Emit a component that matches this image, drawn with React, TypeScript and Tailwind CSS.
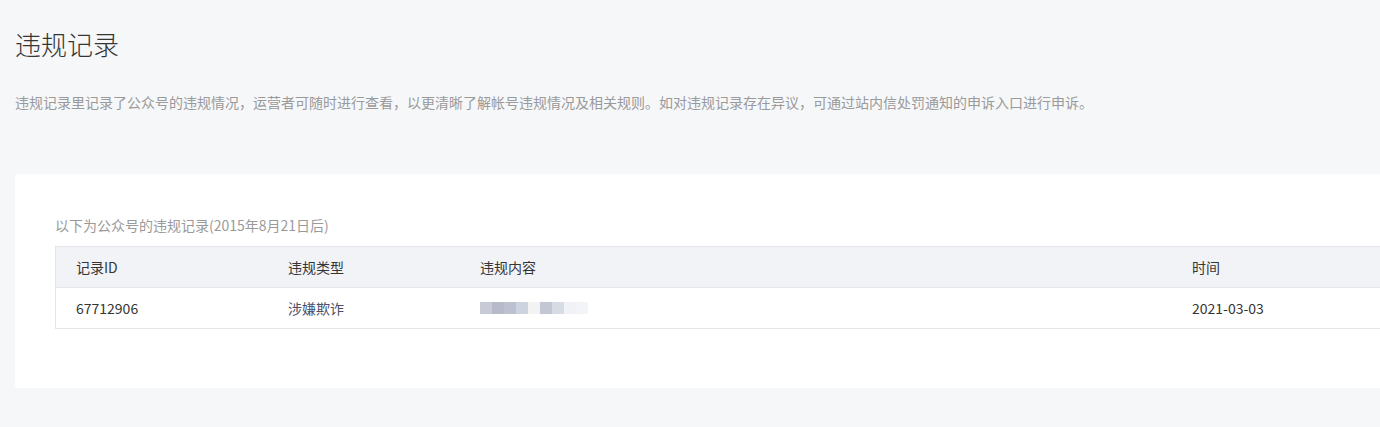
import React from "react";

const blocks = ["#c8cad6", "#b7bac9", "#bcc0d0", "#cdd3df", "#f3f3f4", "#c3c6d3", "#d6dbe4", "#f1f2f5", "#f3f4f7"];

export default function App() {
  const font = { fontFamily: '"Noto Sans CJK SC", "Noto Sans", sans-serif' };
  return (
    <div className="w-[1380px] h-[427px] overflow-hidden bg-[#f6f7f9]" style={font}>
      <div className="pl-[15px] pt-[27px]">
        <h1 className="text-[26px] leading-[34px] text-[#353535] font-light">违规记录</h1>
        <p className="mt-[31px] text-[14px] leading-[20px] text-[#9a9a9a]">
          违规记录里记录了公众号的违规情况，运营者可随时进行查看，以更清晰了解帐号违规情况及相关规则。如对违规记录存在异议，可通过站内信处罚通知的申诉入口进行申诉。
        </p>
        <div className="mt-[62px] w-[1420px] h-[214px] bg-white rounded-[3px] pl-[40px] pt-[41px]">
          <div className="text-[14px] leading-[20px] text-[#9a9a9a]">以下为公众号的违规记录(2015年8月21日后)</div>
          <div className="mt-[11px] border-t border-l border-b border-[#e4e6eb] text-[14px] text-[#353535]">
            <div className="flex h-[41px] items-center bg-[#f2f3f7] border-b border-[#e4e6eb]">
              <div className="w-[212px] pl-[20px]">记录ID</div>
              <div className="w-[192px] pl-[20px]">违规类型</div>
              <div className="w-[712px] pl-[20px]">违规内容</div>
              <div className="pl-[20px]">时间</div>
            </div>
            <div className="flex h-[40px] items-center">
              <div className="w-[212px] pl-[20px]">67712906</div>
              <div className="w-[192px] pl-[20px] text-[#4b5068]">涉嫌欺诈</div>
              <div className="w-[712px] pl-[20px] flex">
                {blocks.map((c, i) => (
                  <span key={i} className="w-[12px] h-[12px] block" style={{ backgroundColor: c }} />
                ))}
              </div>
              <div className="pl-[20px]">2021-03-03</div>
            </div>
          </div>
        </div>
      </div>
    </div>
  );
}
